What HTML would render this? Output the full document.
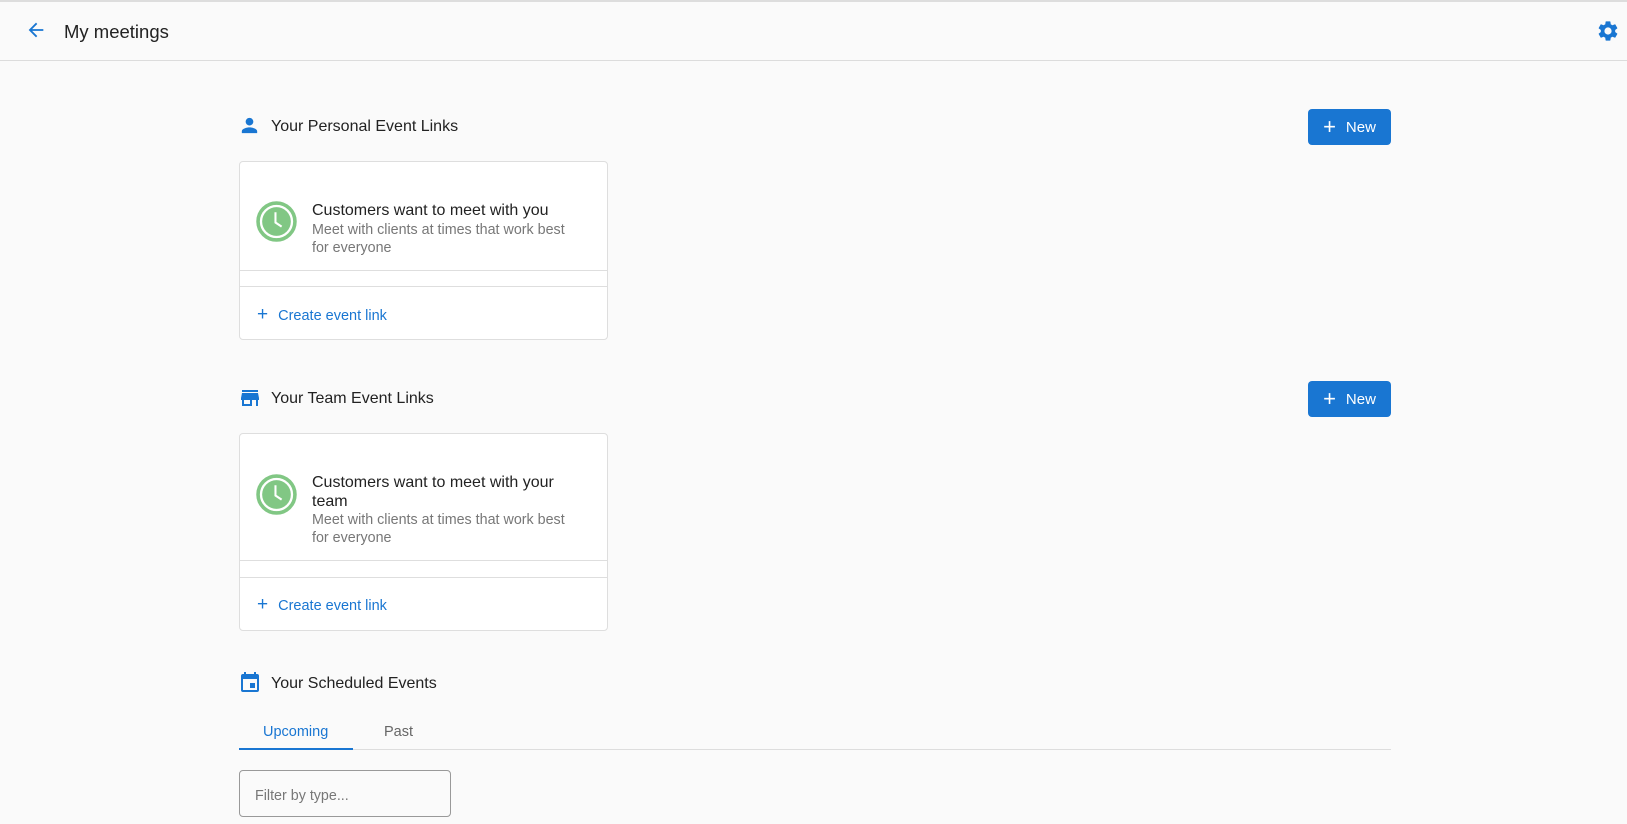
<!DOCTYPE html>
<html><head><meta charset="utf-8"><style>
*{box-sizing:border-box;margin:0;padding:0}
body{width:1627px;height:824px;overflow:hidden;background:#fafafa;font-family:"Liberation Sans",sans-serif;color:#212121;position:relative}
.a{position:absolute}
.hdr{left:0;top:0;width:1627px;height:61px;border-top:2px solid #ddd;border-bottom:1px solid #dcdcdc;background:#fafafa}
.h2{font-size:16px;color:#222;white-space:nowrap}
.btn{width:83px;height:36px;background:#1976d2;border-radius:4px;color:#fff;font-size:15px;display:flex;align-items:center;justify-content:center;gap:10px}
.card{background:#fff;border:1px solid #dedede;border-radius:4px;width:369px}
.t{font-size:16px;color:#222;line-height:18.5px}
.d{font-size:14.3px;color:#777;line-height:18px}
.link{font-size:14.5px;color:#1976d2}
.line{height:1px;background:#dedede;left:0;width:367px}
</style></head><body>
<div class="a hdr"></div>
<svg class="a" style="left:25px;top:19px" width="22" height="22" viewBox="0 0 24 24"><path d="M20 11H7.8l5.6-5.6L12 4l-8 8 8 8 1.4-1.4L7.8 13H20z" fill="#1976d2"/></svg>
<div class="a" style="left:64px;top:21px;font-size:18.5px;color:#222">My meetings</div>
<svg class="a" style="left:1596px;top:19px" width="24" height="24" viewBox="0 0 24 24"><path fill="#1976d2" d="M19.14 12.94c.04-.3.06-.61.06-.94s-.02-.64-.07-.94l2.03-1.58a.49.49 0 0 0 .12-.61l-1.92-3.32a.49.49 0 0 0-.59-.22l-2.39.96c-.5-.38-1.030-.7-1.620-.94l-.36-2.54a.48.48 0 0 0-.48-.41h-3.84a.48.48 0 0 0-.47.41l-.36 2.54c-.59.24-1.130.57-1.620.94l-2.39-.96a.48.48 0 0 0-.59.22L2.74 8.87a.47.47 0 0 0 .12.61l2.03 1.58c-.05.3-.09.63-.09.94s.02.64.07.94l-2.03 1.58a.49.49 0 0 0-.12.61l1.92 3.32c.12.22.37.29.59.22l2.39-.96c.5.38 1.03.7 1.62.94l.36 2.54c.05.24.24.41.48.41h3.84c.24 0 .44-.17.47-.41l.36-2.54c.59-.24 1.13-.56 1.62-.94l2.39.96c.22.08.47 0 .59-.22l1.92-3.32a.47.47 0 0 0-.12-.61zM12 15.6A3.6 3.6 0 1 1 12 8.4a3.6 3.6 0 0 1 0 7.2z"/></svg>

<!-- personal -->
<svg class="a" style="left:238px;top:114px" width="23" height="23" viewBox="0 0 24 24"><path fill="#1976d2" d="M12 12c2.2 0 4-1.8 4-4s-1.8-4-4-4-4 1.8-4 4 1.8 4 4 4zm0 2c-2.7 0-8 1.3-8 4v2h16v-2c0-2.7-5.3-4-8-4z"/></svg>
<div class="a h2" style="left:271px;top:118px">Your Personal Event Links</div>
<div class="a btn" style="left:1308px;top:109px"><span style="font-size:22px;font-weight:300;line-height:1">+</span><span>New</span></div>
<div class="a card" style="left:239px;top:161px;height:179px">
 <svg class="a" style="left:16px;top:39px" width="41" height="41" viewBox="0 0 40 40"><circle cx="20" cy="20" r="18" fill="none" stroke="#81c784" stroke-width="3.5"/><circle cx="20" cy="20" r="14" fill="#81c784"/><path d="M19 11v10l6 4" stroke="#fff" stroke-width="2" fill="none"/></svg>
 <div class="a t" style="left:72px;top:40px">Customers want to meet with you</div>
 <div class="a d" style="left:72px;top:59px;width:270px">Meet with clients at times that work best for everyone</div>
 <div class="a line" style="top:108px"></div>
 <div class="a line" style="top:124px"></div>
 <div class="a link" style="left:17px;top:142px"><span style="font-size:19px;font-weight:300;margin-right:10px">+</span>Create event link</div>
</div>

<!-- team -->
<svg class="a" style="left:238px;top:386px" width="24" height="24" viewBox="0 0 24 24"><path fill="#1976d2" d="M20 4H4v2h16V4zm1 10v-2l-1-5H4l-1 5v2h1v6h10v-6h4v6h2v-6h1zm-9 4H6v-4h6v4z"/></svg>
<div class="a h2" style="left:271px;top:390px">Your Team Event Links</div>
<div class="a btn" style="left:1308px;top:381px"><span style="font-size:22px;font-weight:300;line-height:1">+</span><span>New</span></div>
<div class="a card" style="left:239px;top:433px;height:198px">
 <svg class="a" style="left:16px;top:40px" width="41" height="41" viewBox="0 0 40 40"><circle cx="20" cy="20" r="18" fill="none" stroke="#81c784" stroke-width="3.5"/><circle cx="20" cy="20" r="14" fill="#81c784"/><path d="M19 11v10l6 4" stroke="#fff" stroke-width="2" fill="none"/></svg>
 <div class="a t" style="left:72px;top:40px;width:270px">Customers want to meet with your team</div>
 <div class="a d" style="left:72px;top:77px;width:270px">Meet with clients at times that work best for everyone</div>
 <div class="a line" style="top:126px"></div>
 <div class="a line" style="top:143px"></div>
 <div class="a link" style="left:17px;top:160px"><span style="font-size:19px;font-weight:300;margin-right:10px">+</span>Create event link</div>
</div>

<!-- scheduled -->
<svg class="a" style="left:238px;top:671px" width="24" height="24" viewBox="0 0 24 24"><path fill="#1976d2" d="M17 12h-5v5h5v-5zM16 1v2H8V1H6v2H5a2 2 0 0 0-2 2v14a2 2 0 0 0 2 2h14a2 2 0 0 0 2-2V5a2 2 0 0 0-2-2h-1V1h-2zm3 18H5V8h14v11z"/></svg>
<div class="a h2" style="left:271px;top:675px">Your Scheduled Events</div>
<div class="a" style="left:263px;top:724px;font-size:14.5px;color:#1976d2">Upcoming</div>
<div class="a" style="left:384px;top:724px;font-size:14.5px;color:#666">Past</div>
<div class="a" style="left:239px;top:749px;width:1152px;height:1px;background:#ddd"></div>
<div class="a" style="left:239px;top:748px;width:114px;height:2px;background:#1976d2"></div>
<div class="a" style="left:239px;top:770px;width:212px;height:47px;border:1px solid #999;border-radius:4px;background:#fafafa"></div>
<div class="a" style="left:255px;top:788px;font-size:14.3px;color:#777">Filter by type...</div>
</body></html>
